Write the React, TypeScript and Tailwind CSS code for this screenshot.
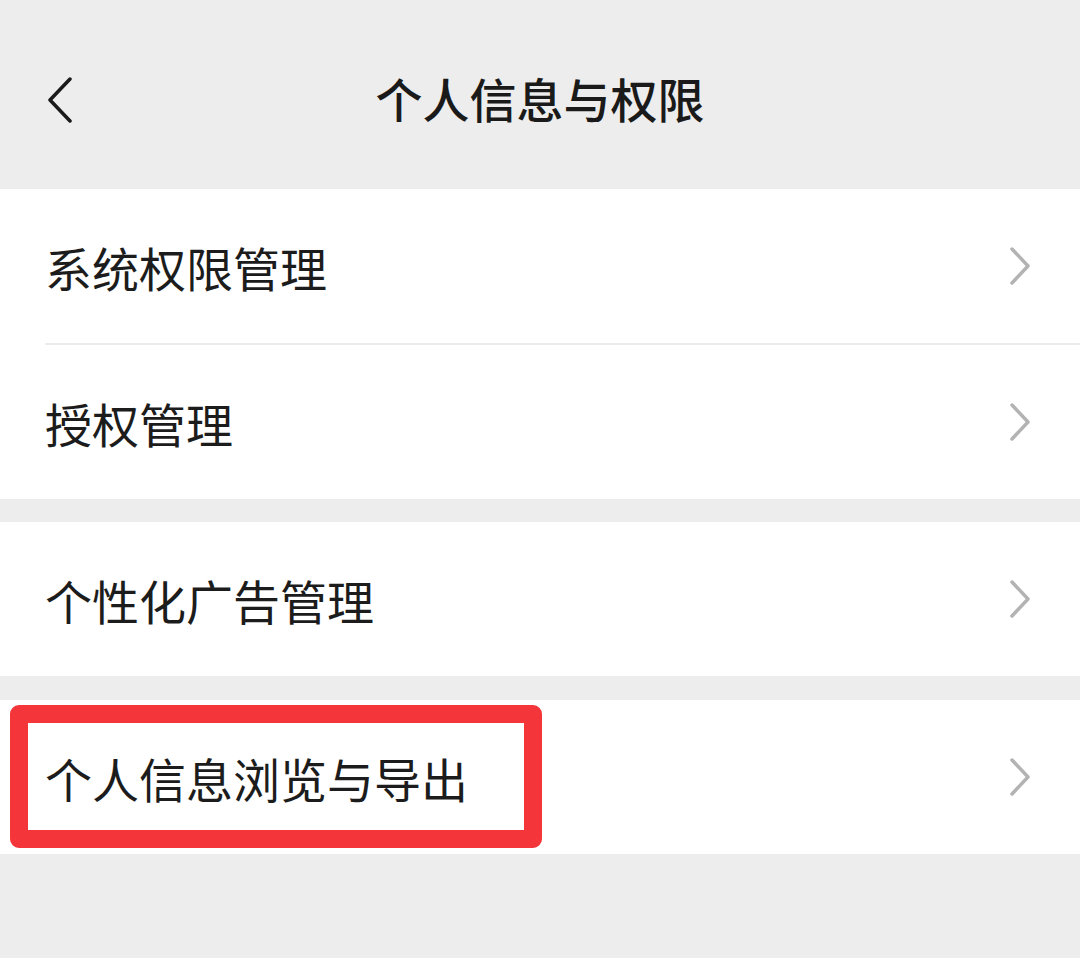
import React from "react";

const Chevron = () => (
  <svg width="24" height="40" viewBox="0 0 24 40" className="shrink-0">
    <path d="M4 3 L20 20 L4 37" fill="none" stroke="#b3b3b3" strokeWidth="3.5" strokeLinecap="round" strokeLinejoin="round" />
  </svg>
);

const Row = ({ label, divider, highlight }: { label: string; divider?: boolean; highlight?: boolean }) => (
  <div className="relative">
    <div className="flex h-[154px] items-center justify-between pl-[45px] pr-[48px]">
      <span className="text-[47px] leading-none text-[#1c1c1c]">{label}</span>
      <Chevron />
    </div>
    {divider && <div className="ml-[45px] h-[2px] bg-[#ececec]" />}
    {highlight && (
      <div className="pointer-events-none absolute left-[10px] top-[5px] h-[143px] w-[532px] rounded-[9px] border-[18px] border-[#f43539]" />
    )}
  </div>
);

export default function App() {
  return (
    <div
      className="flex min-h-[958px] w-[1080px] flex-col bg-[#ededed]"
      style={{ fontFamily: '"Noto Sans CJK SC", "Noto Sans", sans-serif' }}
    >
      <div className="relative flex h-[189px] items-center justify-center">
        <svg width="30" height="48" viewBox="0 0 30 48" className="absolute left-[44px] top-[77px]">
          <path d="M26 2 L6 23 L26 44" fill="none" stroke="#1a1a1a" strokeWidth="3.5" strokeLinecap="round" strokeLinejoin="round" />
        </svg>
        <span className="mt-[6px] text-[47px] font-medium leading-none text-[#1a1a1a]">个人信息与权限</span>
      </div>
      <div className="bg-white">
        <Row label="系统权限管理" />
        <div className="ml-[45px] h-[2px] bg-[#ececec]" />
        <Row label="授权管理" />
      </div>
      <div className="h-[23px]" />
      <div className="bg-white">
        <Row label="个性化广告管理" />
      </div>
      <div className="h-[24px]" />
      <div className="bg-white">
        <Row label="个人信息浏览与导出" highlight />
      </div>
    </div>
  );
}
